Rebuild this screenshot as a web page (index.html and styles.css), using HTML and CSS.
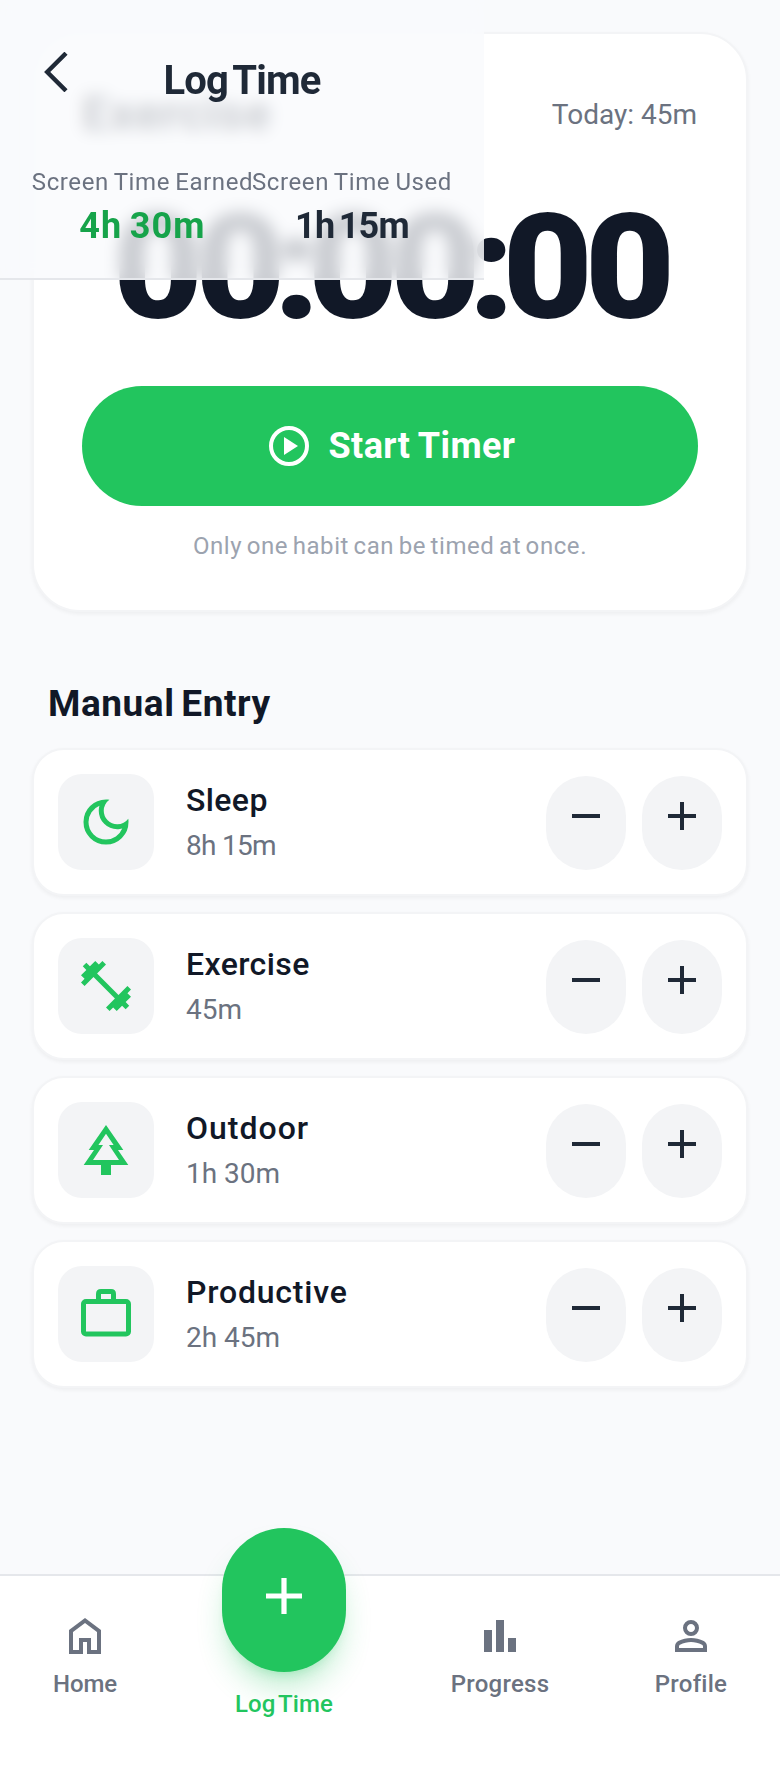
FILE: index.html
```html
<!DOCTYPE html>
<html lang="en">
<head>
<meta charset="utf-8">
<title>Log Time</title>
<link rel="stylesheet" href="styles.css">
</head>
<body>
<header class="topbar">
  <div class="topbar-row">
    <svg class="back" viewBox="0 0 24 40"><path d="M22 1.2 3.2 20 22 38.8" fill="none" stroke="currentColor" stroke-width="4.4"/></svg>
    <h1 class="title">Log Time</h1>
  </div>
  <div class="stats">
    <div class="stat stat-earned"><span class="stat-label">Screen Time Earned</span><span class="stat-value earned">4h 30m</span></div>
    <div class="stat stat-used"><span class="stat-label">Screen Time Used</span><span class="stat-value used">1h 15m</span></div>
  </div>
</header>

<main class="content">
  <section class="timer-card">
    <div class="timer-head"><h2 class="habit">Exercise</h2><span class="today">Today: 45m</span></div>
    <div class="clock">00<span class="colon">:</span>00<span class="colon">:</span>00</div>
    <button class="start">
      <svg class="icon-48" viewBox="0 0 24 24" fill="currentColor"><circle cx="12" cy="12" r="9" fill="none" stroke="currentColor" stroke-width="2"/><path d="M9.5 16.5 16.5 12 9.5 7.5z"/></svg>
      <span>Start Timer</span>
    </button>
    <p class="note">Only one habit can be timed at once.</p>
  </section>

  <h3 class="section-title">Manual Entry</h3>
  <div class="entries">
    <div class="entry">
      <div class="tile"><svg class="icon-60" viewBox="0 -960 960 960" fill="currentColor"><path d="M480-120q-150 0-255-105T120-480q0-150 105-255t255-105q14 0 27.500 1t26.500 3q-41 29-65.500 75.500T444-660q0 90 63 153t153 63q55 0 101-24.500t75-65.500q2 13 3 26.500t1 27.500q0 150-105 255T480-120Zm0-80q88 0 158-48.500T740-375q-20 5-40 8t-40 3q-123 0-209.500-86.500T364-660q0-20 3-40t8-40q-78 32-126.500 102T200-480q0 116 82 198t198 82Z"/></svg></div>
      <div class="entry-text"><span class="name">Sleep</span><span class="amount tight">8h 15m</span></div>
      <div class="steppers"><button class="step"><svg class="step-icon" viewBox="0 0 28 28"><path d="M0 14h28" stroke="currentColor" stroke-width="4"/></svg></button><button class="step"><svg class="step-icon" viewBox="0 0 28 28"><path d="M0 14h28M14 0v28" stroke="currentColor" stroke-width="4"/></svg></button></div>
    </div>
    <div class="entry">
      <div class="tile"><svg class="icon-60" viewBox="0 0 24 24" fill="currentColor"><path d="M20.570 14.860 22 13.430 20.570 12 17 15.570 8.430 7 12 3.430 10.570 2 9.140 3.430 7.710 2 5.570 4.140 4.140 2.710 2.710 4.140l1.430 1.430L2 7.710l1.430 1.430L2 10.570 3.430 12 7 8.430 15.570 17 12 20.570 13.430 22l1.430-1.430L16.290 22l2.140-2.140 1.430 1.430 1.430-1.430-1.430-1.430L22 16.290z"/></svg></div>
      <div class="entry-text"><span class="name">Exercise</span><span class="amount">45m</span></div>
      <div class="steppers"><button class="step"><svg class="step-icon" viewBox="0 0 28 28"><path d="M0 14h28" stroke="currentColor" stroke-width="4"/></svg></button><button class="step"><svg class="step-icon" viewBox="0 0 28 28"><path d="M0 14h28M14 0v28" stroke="currentColor" stroke-width="4"/></svg></button></div>
    </div>
    <div class="entry">
      <div class="tile"><svg class="icon-60" viewBox="0 0 24 24" fill="currentColor" fill-rule="evenodd"><path d="M12 2 18.930 12H16.800L20.930 18H14V22H10V18H3.070L7.200 12H5.070ZM12 5.500 8.950 10H10.800L6.800 16H17.200L13.200 10H15.050Z"/></svg></div>
      <div class="entry-text"><span class="name wide">Outdoor</span><span class="amount">1h 30m</span></div>
      <div class="steppers"><button class="step"><svg class="step-icon" viewBox="0 0 28 28"><path d="M0 14h28" stroke="currentColor" stroke-width="4"/></svg></button><button class="step"><svg class="step-icon" viewBox="0 0 28 28"><path d="M0 14h28M14 0v28" stroke="currentColor" stroke-width="4"/></svg></button></div>
    </div>
    <div class="entry">
      <div class="tile"><svg class="icon-60" viewBox="0 0 24 24" fill="none" stroke="currentColor" stroke-width="2"><rect x="3" y="7" width="18" height="13" rx="1"/><path d="M9 7V4q0-1 1-1h4q1 0 1 1v3"/></svg></div>
      <div class="entry-text"><span class="name wider">Productive</span><span class="amount">2h 45m</span></div>
      <div class="steppers"><button class="step"><svg class="step-icon" viewBox="0 0 28 28"><path d="M0 14h28" stroke="currentColor" stroke-width="4"/></svg></button><button class="step"><svg class="step-icon" viewBox="0 0 28 28"><path d="M0 14h28M14 0v28" stroke="currentColor" stroke-width="4"/></svg></button></div>
    </div>
  </div>
</main>

<nav class="tabs">
  <a class="tab tab-home"><svg class="icon-48" viewBox="0 -960 960 960" fill="currentColor"><path d="M240-200h120v-240h240v240h120v-360L480-740 240-560v360Zm-80 80v-480l320-240 320 240v480H520v-240h-80v240H160Z"/></svg><span>Home</span></a>
  <a class="tab tab-log"><span class="fab"><svg class="fab-icon" viewBox="0 0 36 36"><path d="M0 18h36M18 0v36" stroke="currentColor" stroke-width="5.200"/></svg></span><span>Log Time</span></a>
  <a class="tab tab-progress"><svg class="icon-48" viewBox="0 0 24 24" fill="currentColor"><path d="M4 9h4v11H4zM10 4h4v16h-4zM16 13h4v7h-4z"/></svg><span>Progress</span></a>
  <a class="tab tab-profile"><svg class="icon-48" viewBox="0 -960 960 960" fill="currentColor"><path d="M480-480q-66 0-113-47t-47-113q0-66 47-113t113-47q66 0 113 47t47 113q0 66-47 113t-113 47ZM160-160v-112q0-34 17.500-62.500T224-378q62-31 126-46.500T480-440q66 0 130 15.500T736-378q29 15 46.500 43.500T800-272v112H160Zm80-80h480v-32q0-11-5.500-20T700-306q-54-27-109-40.500T480-360q-56 0-111 13.500T260-306q-9 5-14.500 14t-5.500 20v32Zm240-320q33 0 56.500-23.500T560-640q0-33-23.500-56.500T480-720q-33 0-56.500 23.500T400-640q0 33 23.500 56.500T480-560Z"/></svg><span>Profile</span></a>
</nav>
</body>
</html>
```
FILE: styles.css
```css
* { box-sizing: border-box; margin: 0; padding: 0; }
body {
  position: relative;
  width: 780px;
  height: 1768px;
  display: flex;
  flex-direction: column;
  overflow: hidden;
  background: #f9fafc;
  color: #111827;
  font-family: Roboto, "Liberation Sans", sans-serif;
}
button { border: 0; font: inherit; color: inherit; }
svg { display: block; flex: none; }
.icon-48 { width: 48px; height: 48px; }
.icon-60 { width: 60px; height: 60px; }

/* translucent bar floating over the timer card */
.topbar {
  position: absolute;
  z-index: 2;
  top: 0;
  left: 0;
  width: 484px;
  height: 280px;
  padding: 48px 32px 0;
  border-bottom: 2px solid #e5e7eb;
  background: rgba(249, 250, 252, .8);
  backdrop-filter: blur(8px);
  color: #1f2937;
}
.topbar-row { display: grid; grid-template-columns: 24px 1fr 24px; height: 64px; padding: 0 12px; }
.back { width: 24px; height: 40px; margin-top: 4px; }
.title { font-size: 40px; line-height: 66px; font-weight: 700; letter-spacing: -.800px; word-spacing: -4px; text-align: center; }
.stats { display: flex; margin-top: 54px; }
.stat { display: flex; flex-direction: column; align-items: center; white-space: nowrap; }
.stat-earned { width: 221px; }
.stat-used { width: 198px; }
.stat-label { font-size: 24px; line-height: 32px; letter-spacing: .600px; word-spacing: -1.300px; color: #6b7280; }
.stat-value { font-size: 36px; line-height: 56px; font-weight: 700; }
.earned { color: #16a34a; letter-spacing: 1.200px; word-spacing: -3px; }
.used { letter-spacing: -.700px; word-spacing: -4px; }

.content { flex: 1; padding: 32px 32px 0; }
.timer-card {
  height: 580px;
  padding: 48px;
  border: 2px solid #f3f4f6;
  border-radius: 48px;
  background: #fff;
  box-shadow: 0 2px 4px rgba(0, 0, 0, .05);
}
.timer-head { display: flex; justify-content: space-between; align-items: center; height: 64px; }
.habit { font-size: 48px; line-height: 64px; letter-spacing: .900px; }
.today { padding: 2px 1px 0 0; font-size: 28px; line-height: 40px; color: #6b7280; }
.clock {
  height: 144px;
  margin: 48px 0;
  padding-top: 2px;
  font-size: 147px;
  line-height: 144px;
  font-weight: 900;
  letter-spacing: -7.700px;
  text-align: center;
  white-space: nowrap;
  transform: scaleX(1.062);
}
.colon { margin: 0 -4px; }
.start {
  display: flex;
  align-items: center;
  justify-content: center;
  gap: 16px;
  width: 100%;
  height: 120px;
  border-radius: 60px;
  background: #22c55e;
  color: #fff;
  font-size: 36px;
  font-weight: 700;
  letter-spacing: .400px;
  word-spacing: -1px;
}
.note { margin-top: 24px; font-size: 24px; line-height: 32px; letter-spacing: .580px; word-spacing: -2px; text-align: center; color: #9ca3af; }

.section-title { margin: 66px 16px 18px; font-size: 37px; line-height: 52px; letter-spacing: .550px; word-spacing: -3px; }
.entries { display: grid; gap: 16px; }
.entry {
  display: flex;
  align-items: center;
  height: 148px;
  padding: 0 24px;
  border: 2px solid #f3f4f6;
  border-radius: 32px;
  background: #fff;
  box-shadow: 0 2px 4px rgba(0, 0, 0, .05);
}
.tile { display: grid; place-items: center; width: 96px; height: 96px; border-radius: 24px; background: #f3f4f6; color: #22c55e; }
.entry-text { display: flex; flex: 1; flex-direction: column; gap: 2px; margin-left: 32px; }
.name { font-size: 32px; line-height: 46px; font-weight: 500; letter-spacing: .400px; }
.wide { letter-spacing: 1px; }
.wider { letter-spacing: .800px; }
.amount { font-size: 28px; line-height: 42px; color: #6b7280; }
.tight { letter-spacing: -.700px; }
.steppers { display: flex; gap: 16px; padding-top: 2px; }
.step { display: flex; justify-content: center; align-items: flex-start; width: 80px; height: 94px; padding-top: 26px; border-radius: 40px; background: #f3f4f6; color: #1f2937; }
.step-icon { width: 28px; height: 28px; }

.tabs {
  display: flex;
  justify-content: space-around;
  height: 194px;
  border-top: 2px solid #e5e7eb;
  background: #fff;
}
.tab { display: flex; flex-direction: column; align-items: center; padding-top: 36px; color: #6b7280; font-size: 24px; line-height: 32px; font-weight: 500; letter-spacing: .250px; }
.tab span { margin-top: 8px; }
.tab-home { width: 66px; letter-spacing: -.100px; }
.tab-log { width: 124px; padding: 0; color: #22c55e; letter-spacing: .100px; word-spacing: -3px; }
.tab-progress { width: 100px; }
.tab-profile { width: 74px; }
.tab .fab {
  display: flex;
  justify-content: center;
  width: 124px;
  height: 144px;
  margin-top: -48px;
  margin-bottom: 8px;
  padding-top: 50px;
  border-radius: 62px;
  background: #22c55e;
  color: #fff;
  box-shadow: 0 20px 30px -6px rgba(34, 197, 94, .3), 0 8px 12px -8px rgba(34, 197, 94, .3);
}
.fab-icon { width: 36px; height: 36px; }
```
